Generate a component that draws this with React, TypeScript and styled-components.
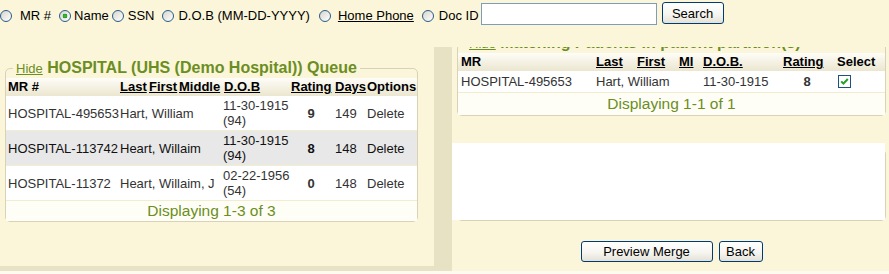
import React from "react";
import styled, { createGlobalStyle } from "styled-components";

const sans = `"Liberation Sans", Arial, sans-serif`;
const olive = "#6b8e23";

const GlobalStyle = createGlobalStyle`
  html, body {
    margin: 0;
    padding: 0;
  }
  body {
    background: #fbf6d9;
    font-family: ${sans};
    font-size: 13px;
    color: #000;
    overflow: hidden;
  }
`;

type QueueRow = {
  mr: string;
  name: string;
  dob: string;
  age: string;
  rating: number;
  days: number;
  shade?: boolean;
};

const queue: QueueRow[] = [
  { mr: "HOSPITAL-495653", name: "Hart, William", dob: "11-30-1915", age: "(94)", rating: 9, days: 149 },
  { mr: "HOSPITAL-113742", name: "Heart, Willaim", dob: "11-30-1915", age: "(94)", rating: 8, days: 148, shade: true },
  { mr: "HOSPITAL-11372", name: "Heart, Willaim, J", dob: "02-22-1956", age: "(54)", rating: 0, days: 148 },
];

const queueCols = [112, 29, 30, 45, 67, 44, 32, 52];
const matchCols = [135, 41, 42, 24, 80, 54, 51];

function Radio({ checked }: { checked?: boolean }) {
  return <RadioDot $checked={checked} />;
}

function CheckBox() {
  return (
    <Check>
      <svg width="11" height="11" viewBox="0 0 11 11">
        <path d="M2.2 5.4 L4.4 7.6 L8.8 3" fill="none" stroke="#21a121" strokeWidth="2" />
      </svg>
    </Check>
  );
}

function App() {
  return (
    <>
      <GlobalStyle />
      <SearchBar>
        <Option $gap={8} $trail={8}>
          <Radio />
          <span>MR #</span>
        </Option>
        <Option $gap={3} $trail={3}>
          <Radio checked />
          <span>Name</span>
        </Option>
        <Option $gap={4} $trail={8}>
          <Radio />
          <span>SSN</span>
        </Option>
        <Option $gap={4} $trail={9}>
          <Radio />
          <span>D.O.B (MM-DD-YYYY)</span>
        </Option>
        <Option $gap={7} $trail={8}>
          <Radio />
          <PlainLink>Home Phone</PlainLink>
        </Option>
        <Option $gap={5} $trail={2}>
          <Radio />
          <span>Doc ID</span>
        </Option>
        <SearchInput type="text" />
        <XPButton $w={62} $h={22} $lift>
          Search
        </XPButton>
      </SearchBar>

      <Frame>
        <LeftPanel>
          <Box>
            <Legend $offset={7}>
              <HideLink>Hide</HideLink> <Title>HOSPITAL (UHS (Demo Hospital)) Queue</Title>
            </Legend>
            <Table>
              <colgroup>
                {queueCols.map((w, i) => (
                  <Col key={i} $w={w} />
                ))}
              </colgroup>
              <thead>
                <HeadRow>
                  <HeadCell>MR #</HeadCell>
                  <HeadCell><Sort>Last</Sort></HeadCell>
                  <HeadCell><Sort>First</Sort></HeadCell>
                  <HeadCell><Sort>Middle</Sort></HeadCell>
                  <HeadCell><Sort>D.O.B</Sort></HeadCell>
                  <HeadCell><Sort>Rating</Sort></HeadCell>
                  <HeadCell><Sort>Days</Sort></HeadCell>
                  <HeadCell>Options</HeadCell>
                </HeadRow>
              </thead>
              <tbody>
                {queue.map((r) => (
                  <DataRow key={r.mr} $shade={r.shade}>
                    <Cell>{r.mr}</Cell>
                    <Cell colSpan={3}>{r.name}</Cell>
                    <Cell $tight>
                      {r.dob}
                      <br />
                      {r.age}
                    </Cell>
                    <Cell $center $bold>{r.rating}</Cell>
                    <Cell>{r.days}</Cell>
                    <Cell>Delete</Cell>
                  </DataRow>
                ))}
                <tr>
                  <FooterCell colSpan={8}>Displaying 1-3 of 3</FooterCell>
                </tr>
              </tbody>
            </Table>
          </Box>
        </LeftPanel>

        <RightPanel>
          <Scrolled>
            <Box>
              <Legend $offset={8}>
                <HideLink>Hide</HideLink> <Title>Matching Patients in patient partition(s)</Title>
              </Legend>
              <Table>
                <colgroup>
                  {matchCols.map((w, i) => (
                    <Col key={i} $w={w} />
                  ))}
                </colgroup>
                <thead>
                  <HeadRow>
                    <HeadCell $wide>MR</HeadCell>
                    <HeadCell $wide><Sort>Last</Sort></HeadCell>
                    <HeadCell $wide><Sort>First</Sort></HeadCell>
                    <HeadCell $wide><Sort>MI</Sort></HeadCell>
                    <HeadCell $wide><Sort>D.O.B.</Sort></HeadCell>
                    <HeadCell $wide><Sort>Rating</Sort></HeadCell>
                    <HeadCell $wide>Select</HeadCell>
                  </HeadRow>
                </thead>
                <tbody>
                  <DataRow>
                    <Cell $wide>HOSPITAL-495653</Cell>
                    <Cell $wide colSpan={3}>Hart, William</Cell>
                    <Cell $wide>11-30-1915</Cell>
                    <Cell $wide $center $bold>8</Cell>
                    <Cell $wide>
                      <CheckBox />
                    </Cell>
                  </DataRow>
                  <tr>
                    <FooterCell colSpan={7} $roomy>
                      Displaying 1-1 of 1
                    </FooterCell>
                  </tr>
                </tbody>
              </Table>
            </Box>

            <MergeBox>
              <MergePreview />
            </MergeBox>

            <Actions>
              <XPButton $w={132} $h={21}>Preview Merge</XPButton>
              <XPButton $w={44} $h={21}>Back</XPButton>
            </Actions>
          </Scrolled>
        </RightPanel>
      </Frame>
      <BottomEdge />
    </>
  );
}

const SearchBar = styled.div`
  display: flex;
  align-items: flex-start;
  height: 47px;
  box-sizing: border-box;
  padding-top: 3px;
  white-space: nowrap;
`;

const Option = styled.label<{ $gap: number; $trail: number }>`
  display: flex;
  align-items: center;
  height: 15px;
  margin-top: 5px;
  margin-right: ${(p) => p.$trail}px;
  gap: ${(p) => p.$gap}px;
  line-height: 15px;
`;

const RadioDot = styled.span<{ $checked?: boolean }>`
  box-sizing: border-box;
  width: 12px;
  height: 12px;
  border-radius: 50%;
  border: 1px solid #2b5a87;
  background: ${(p) =>
    p.$checked
      ? "radial-gradient(circle at 50% 50%, #3fbf3f 0, #21a121 2.2px, transparent 2.6px), linear-gradient(135deg, #d6d5cd, #ffffff)"
      : "linear-gradient(135deg, #d6d5cd, #ffffff)"};
`;

const PlainLink = styled.span`
  text-decoration: underline;
  color: #000;
`;

const SearchInput = styled.input`
  box-sizing: border-box;
  width: 176px;
  height: 22px;
  margin: 0 5px 0 0;
  border: 1px solid #7f9db9;
  background: #fff;
  padding: 1px 3px;
  font: 13px ${sans};
`;

const XPButton = styled.button<{ $w: number; $h: number; $lift?: boolean }>`
  box-sizing: border-box;
  width: ${(p) => p.$w}px;
  height: ${(p) => p.$h}px;
  margin-top: ${(p) => (p.$lift ? -1 : 0)}px;
  padding: 0;
  border: 1px solid #003c74;
  border-radius: 3px;
  background: linear-gradient(#ffffff 0%, #f6f5f0 55%, #e4e1d6 100%);
  font: 13px ${sans};
  color: #000;
`;

const Frame = styled.div`
  display: grid;
  grid-template-columns: 434px 1fr;
  column-gap: 18px;
  align-items: start;
  height: 224px;
  background: #e7e2c4;
`;

const LeftPanel = styled.div`
  height: 219px;
  box-sizing: border-box;
  padding: 12px 16px 0 5px;
  background: #fbf6d9;
`;

const RightPanel = styled.div`
  height: 224px;
  box-sizing: border-box;
  padding: 0 3px 0 5px;
  overflow: hidden;
  background: #fbf6d9;
`;

const Scrolled = styled.div`
  margin-top: -13px;
`;

const Box = styled.fieldset`
  margin: 0;
  padding: 0;
  min-width: 0;
  border: 1px solid #d8d3b6;
  border-radius: 5px;
`;

const Legend = styled.legend<{ $offset: number }>`
  margin-left: ${(p) => p.$offset}px;
  padding: 0 3px;
  font-size: 16px;
  line-height: 18px;
  color: ${olive};
  white-space: nowrap;
`;

const HideLink = styled.span`
  font-size: 13px;
  text-decoration: underline;
`;

const Title = styled.span`
  font-weight: bold;
`;

const Table = styled.table`
  width: 100%;
  table-layout: fixed;
  border-collapse: collapse;
  font-size: 13px;
`;

const Col = styled.col<{ $w: number }>`
  width: ${(p) => p.$w}px;
`;

const HeadRow = styled.tr`
  background: linear-gradient(#fefdf8, #ebe6cf);
`;

const HeadCell = styled.th<{ $wide?: boolean }>`
  padding: ${(p) => (p.$wide ? "1px 3px" : "1px 2px")};
  text-align: left;
  font-weight: bold;
  line-height: 16px;
  white-space: nowrap;
  overflow: visible;
  color: #000;
`;

const Sort = styled.span`
  text-decoration: underline;
`;

const DataRow = styled.tr<{ $shade?: boolean }>`
  background: ${(p) => (p.$shade ? "#e8e8e8" : "#ffffff")};
  color: ${(p) => (p.$shade ? "#111" : "#333")};
  border-bottom: 1px solid #f2edcf;
`;

const Cell = styled.td<{ $center?: boolean; $bold?: boolean; $tight?: boolean; $wide?: boolean }>`
  padding: ${(p) => (p.$wide ? "1px 3px" : p.$tight ? "2px 1px" : "2px 2px")};
  line-height: 15px;
  vertical-align: middle;
  white-space: nowrap;
  text-align: ${(p) => (p.$center ? "center" : "left")};
  font-weight: ${(p) => (p.$bold ? "bold" : "normal")};
`;

const FooterCell = styled.td<{ $roomy?: boolean }>`
  padding: ${(p) => (p.$roomy ? "2px 0" : "1px 0")};
  text-align: center;
  font-size: 15.5px;
  line-height: 18px;
  color: ${olive};
  background: #fffef6;
`;

const Check = styled.span`
  display: flex;
  align-items: center;
  justify-content: center;
  box-sizing: border-box;
  width: 13px;
  height: 13px;
  margin: 3px 0 3px 1px;
  border: 1px solid #1c5180;
  background: #fff;
`;

const MergeBox = styled.div`
  margin-top: 33px;
  border: 1px solid #d8d3b6;
  border-radius: 5px;
`;

const MergePreview = styled.div`
  height: 77px;
  margin: -7px 0 0 -6px;
  background: #fff;
`;

const Actions = styled.div`
  display: flex;
  justify-content: center;
  gap: 6px;
  margin-top: 20px;
`;

const BottomEdge = styled.div`
  height: 3px;
  background: #fdfbef;
`;

export default App;
